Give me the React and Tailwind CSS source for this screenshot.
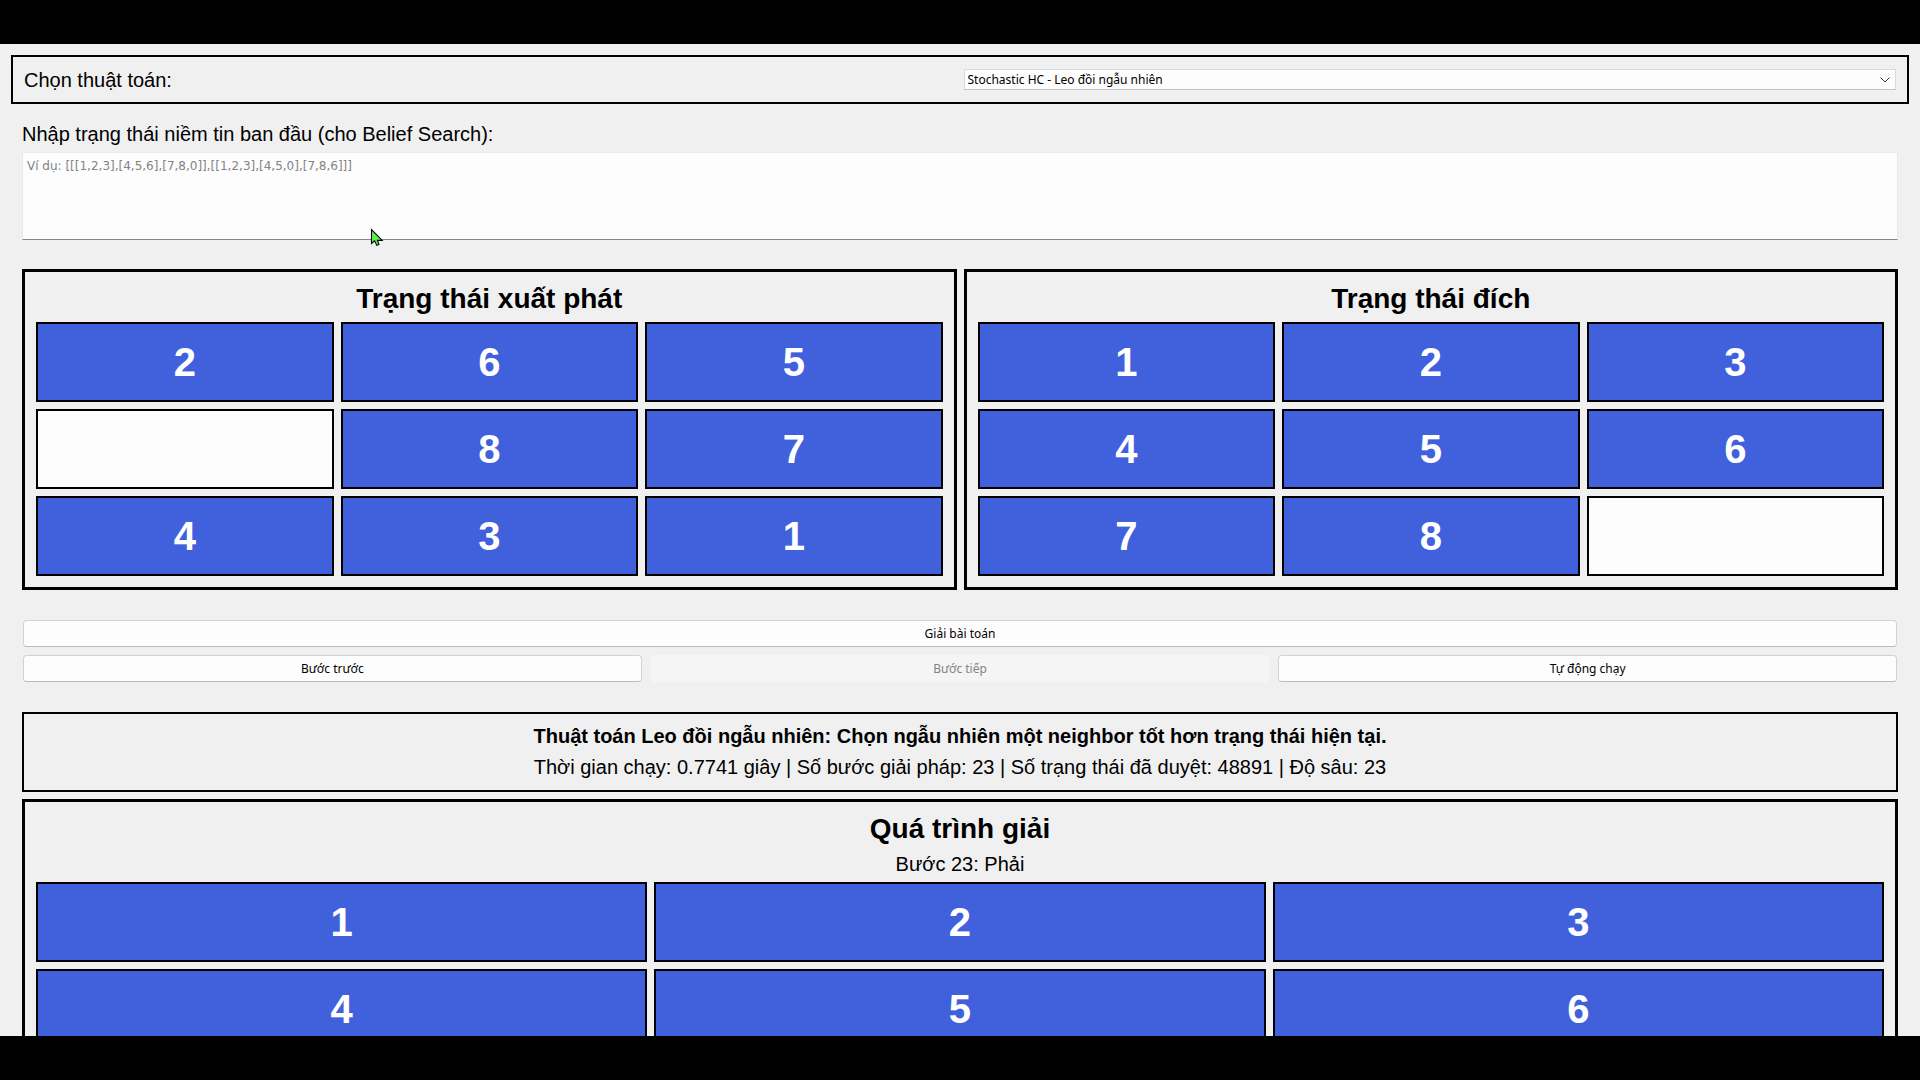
import React from "react";

const START = [2, 6, 5, 0, 8, 7, 4, 3, 1];
const GOAL = [1, 2, 3, 4, 5, 6, 7, 8, 0];
const CURRENT = [1, 2, 3, 4, 5, 6];

function Tile({ value }) {
  return (
    <div
      className={
        "flex h-20 items-center justify-center border-2 border-black text-[40px] leading-none font-bold text-white " +
        (value ? "bg-[#4161dc]" : "bg-[#fdfdfd]")
      }
    >
      {value || null}
    </div>
  );
}

function Board({ values }) {
  return (
    <div className="grid grid-cols-3 gap-[7px]">
      {values.map((v, i) => (
        <Tile key={i} value={v} />
      ))}
    </div>
  );
}

function StatePanel({ title, values }) {
  return (
    <section className="flex-1 border-3 border-black px-[11px] pt-[9px] pb-[11px]">
      <h2 className="mb-[5px] text-center text-[28px] leading-9 font-bold">{title}</h2>
      <Board values={values} />
    </section>
  );
}

function ActionButton({ children, disabled }) {
  return (
    <button
      type="button"
      disabled={disabled}
      className="h-[27px] min-w-0 flex-1 rounded-sm border border-[#d2d2d2] border-b-[#bcbcbc] bg-[#fdfdfd] font-['Noto_Sans','DejaVu_Sans',sans-serif] text-xs text-black disabled:border-[#f5f5f5] disabled:bg-[#f5f5f5] disabled:text-[#838383]"
    >
      {children}
    </button>
  );
}

export default function App() {
  return (
    <div className="h-screen bg-black py-11 font-['Liberation_Sans',Arial,sans-serif] text-black">
      <main className="relative h-full overflow-hidden bg-[#f0f0f0] px-[11px] pt-[11px]">
        <div className="flex items-center gap-[7px] border-2 border-black px-[11px] py-3">
          <label htmlFor="algorithm" className="flex-1 text-xl leading-5">
            Chọn thuật toán:
          </label>
          <div className="relative flex flex-1">
            <select
              id="algorithm"
              className="h-[21px] w-full appearance-none border border-[#dadada] border-b-[#c4c4c4] bg-[#fdfdfd] pr-6 pl-[3px] font-['Noto_Sans','DejaVu_Sans',sans-serif] text-xs"
            >
              <option>Stochastic HC - Leo đồi ngẫu nhiên</option>
            </select>
            <svg
              className="pointer-events-none absolute top-2 right-[6px] h-[6px] w-[10px]"
              viewBox="0 0 10 6"
              fill="none"
              stroke="#333"
            >
              <path d="M0.5 0.5 L5 5 L9.5 0.5" />
            </svg>
          </div>
        </div>

        <div className="px-[11px] pt-[18px]">
          <label htmlFor="belief" className="block text-xl leading-6">
            Nhập trạng thái niềm tin ban đầu (cho Belief Search):
          </label>
          <textarea
            id="belief"
            className="mt-[6px] block h-[88px] w-full resize-none border border-[#e9e9e9] border-b-[#868686] bg-[#fdfdfd] px-1 py-[5px] font-['DejaVu_Sans',sans-serif] text-xs placeholder:text-[#838383]"
            placeholder="Ví dụ: [[[1,2,3],[4,5,6],[7,8,0]],[[1,2,3],[4,5,0],[7,8,6]]]"
          />

          <div className="mt-[29px] flex gap-[7px]">
            <StatePanel title="Trạng thái xuất phát" values={START} />
            <StatePanel title="Trạng thái đích" values={GOAL} />
          </div>

          <div className="mt-[30px] flex flex-col gap-2 px-px">
            <div className="flex">
              <ActionButton>Giải bài toán</ActionButton>
            </div>
            <div className="flex gap-[9px]">
              <ActionButton>Bước trước</ActionButton>
              <ActionButton disabled>Bước tiếp</ActionButton>
              <ActionButton>Tự động chạy</ActionButton>
            </div>
          </div>

          <section className="mt-[30px] border-2 border-black py-[7px] text-center text-xl leading-[31px]">
            <p className="font-bold">
              Thuật toán Leo đồi ngẫu nhiên: Chọn ngẫu nhiên một neighbor tốt hơn trạng thái hiện tại.
            </p>
            <p>Thời gian chạy: 0.7741 giây | Số bước giải pháp: 23 | Số trạng thái đã duyệt: 48891 | Độ sâu: 23</p>
          </section>

          <section className="mt-[7px] border-3 border-black px-[11px] pt-[9px] pb-[11px] text-center">
            <h2 className="text-[28px] leading-9 font-bold">Quá trình giải</h2>
            <p className="mt-1 mb-1 text-xl leading-[27px]">Bước 23: Phải</p>
            <Board values={CURRENT} />
          </section>
        </div>

        <svg
          className="pointer-events-none absolute top-[184px] left-[370px] h-[19px] w-[14px]"
          viewBox="0 0 14 19"
        >
          <path
            d="M1.5 1.5 V15.5 L4.6 12.8 L6.8 17.4 L9 16.4 L7.4 12.4 H12.2 Z"
            fill="#5cf04c"
            stroke="#000"
            strokeWidth="1.1"
          />
        </svg>
      </main>
    </div>
  );
}
